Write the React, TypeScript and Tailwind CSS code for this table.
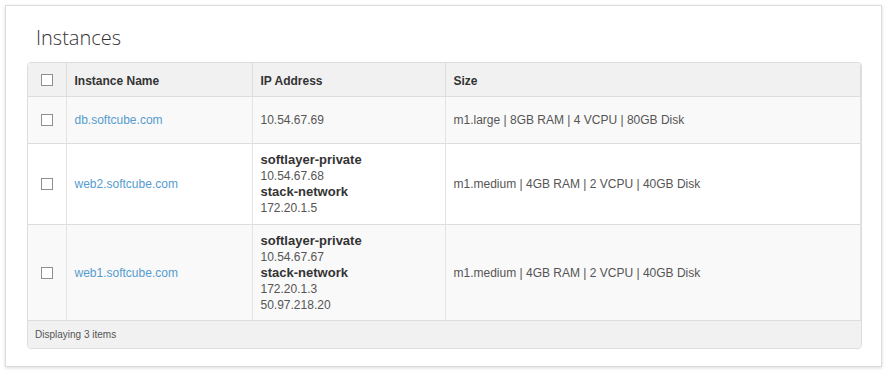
const rows = [
  {
    name: 'db.softcube.com',
    ips: [{ label: '', addrs: ['10.54.67.69'] }],
    size: 'm1.large | 8GB RAM | 4 VCPU | 80GB Disk',
    h: 'h-[47px]',
    bg: 'bg-[#f9f9f9]',
  },
  {
    name: 'web2.softcube.com',
    ips: [
      { label: 'softlayer-private', addrs: ['10.54.67.68'] },
      { label: 'stack-network', addrs: ['172.20.1.5'] },
    ],
    size: 'm1.medium | 4GB RAM | 2 VCPU | 40GB Disk',
    h: 'h-[81px]',
    bg: 'bg-white',
  },
  {
    name: 'web1.softcube.com',
    ips: [
      { label: 'softlayer-private', addrs: ['10.54.67.67'] },
      { label: 'stack-network', addrs: ['172.20.1.3', '50.97.218.20'] },
    ],
    size: 'm1.medium | 4GB RAM | 2 VCPU | 40GB Disk',
    h: 'h-[96px]',
    bg: 'bg-[#f9f9f9]',
  },
]

function Box() {
  return <span className="block w-[12px] h-[12px] border border-[#8f8f8f] bg-white mx-auto" />
}

export default function App() {
  return (
    <div className="w-[887px] h-[373px] bg-white p-[5px]" style={{ fontFamily: '"Liberation Sans", Arial, sans-serif' }}>
      {/* Card */}
      <div className="w-[877px] h-[362px] bg-white border border-[#dcdcdc] shadow-[0_1px_3px_rgba(0,0,0,0.15)] pt-[19px] pl-[21px]">
        <h1 className="text-[20px] leading-[26px] text-[#333] font-light ml-[9px] mb-[11px]" style={{ fontFamily: '"Open Sans", sans-serif' }}>
          Instances
        </h1>

        {/* Table */}
        <div className="w-[835px] border border-[#dddddd] rounded-[4px] overflow-hidden text-[12px] text-[#555]">
          <table className="w-full border-collapse table-fixed">
            <colgroup>
              <col className="w-[38px]" />
              <col className="w-[186px]" />
              <col className="w-[193px]" />
              <col />
            </colgroup>
            <thead>
              <tr className="h-[33px] bg-[#f1f1f1] text-left text-[#333]">
                <th className="pt-[2px] border-r border-[#dddddd]"><Box /></th>
                <th className="px-[8px] pt-[3px] font-bold border-r border-[#dddddd]">Instance Name</th>
                <th className="px-[8px] pt-[3px] font-bold border-r border-[#dddddd]">IP Address</th>
                <th className="px-[8px] pt-[3px] font-bold border-r border-[#dddddd]">Size</th>
              </tr>
            </thead>
            <tbody>
              {rows.map((r) => (
                <tr key={r.name} className={`${r.h} ${r.bg} border-t border-[#dddddd]`}>
                  <td className="pt-[1px] border-r border-[#e3e3e3]"><Box /></td>
                  <td className="px-[8px] pt-[1px] border-r border-[#e3e3e3] text-[#559ccf]">{r.name}</td>
                  <td className="px-[8px] pt-[1px] border-r border-[#e3e3e3] leading-[16px]">
                    {r.ips.map((g, i) => (
                      <div key={i}>
                        {g.label && <div className="font-bold text-[13px] text-[#333]">{g.label}</div>}
                        {g.addrs.map((a) => (
                          <div key={a}>{a}</div>
                        ))}
                      </div>
                    ))}
                  </td>
                  <td className="px-[8px] pt-[1px] border-r border-[#e3e3e3]">{r.size}</td>
                </tr>
              ))}
            </tbody>
          </table>
          <div className="h-[28px] bg-[#f1f1f1] border-t border-[#dddddd] flex items-center pl-[7px] text-[10px] text-[#555]">
            Displaying 3 items
          </div>
        </div>
      </div>
    </div>
  )
}
